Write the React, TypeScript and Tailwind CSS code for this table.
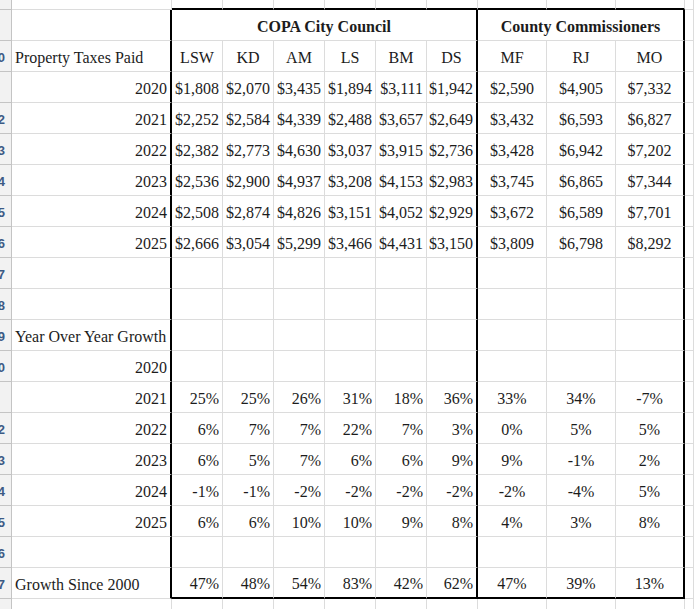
import React from "react";

const city = ["LSW", "KD", "AM", "LS", "BM", "DS"];
const county = ["MF", "RJ", "MO"];

const taxes: [string, string[]][] = [
  ["2020", ["$1,808", "$2,070", "$3,435", "$1,894", "$3,111", "$1,942", "$2,590", "$4,905", "$7,332"]],
  ["2021", ["$2,252", "$2,584", "$4,339", "$2,488", "$3,657", "$2,649", "$3,432", "$6,593", "$6,827"]],
  ["2022", ["$2,382", "$2,773", "$4,630", "$3,037", "$3,915", "$2,736", "$3,428", "$6,942", "$7,202"]],
  ["2023", ["$2,536", "$2,900", "$4,937", "$3,208", "$4,153", "$2,983", "$3,745", "$6,865", "$7,344"]],
  ["2024", ["$2,508", "$2,874", "$4,826", "$3,151", "$4,052", "$2,929", "$3,672", "$6,589", "$7,701"]],
  ["2025", ["$2,666", "$3,054", "$5,299", "$3,466", "$4,431", "$3,150", "$3,809", "$6,798", "$8,292"]],
];

const growth: [string, string[]][] = [
  ["2020", ["", "", "", "", "", "", "", "", ""]],
  ["2021", ["25%", "25%", "26%", "31%", "18%", "36%", "33%", "34%", "-7%"]],
  ["2022", ["6%", "7%", "7%", "22%", "7%", "3%", "0%", "5%", "5%"]],
  ["2023", ["6%", "5%", "7%", "6%", "6%", "9%", "9%", "-1%", "2%"]],
  ["2024", ["-1%", "-1%", "-2%", "-2%", "-2%", "-2%", "-2%", "-4%", "5%"]],
  ["2025", ["6%", "6%", "10%", "10%", "9%", "8%", "4%", "3%", "8%"]],
];

const since2000 = ["47%", "48%", "54%", "83%", "42%", "62%", "47%", "39%", "13%"];

// row numbers show only the clipped tail of the last digit (the header is scrolled off-screen)
function RowHead({ n }: { n: number }) {
  const hidden = n < 10 || n % 10 === 1;
  return (
    <div className="h-[31px] overflow-hidden border-r border-b border-[#c4c4c4] bg-[#f2f2f2]">
      {!hidden && (
        <div className="-ml-[11px] w-[18px] pt-[2px] pr-[2px] text-right font-['Liberation_Sans',sans-serif] text-[13px] font-bold leading-[30px] text-[#3c5a85]">
          {n % 10}
        </div>
      )}
    </div>
  );
}

function Cell({
  children,
  align = "right",
  right,
  bottom,
  bold,
  span,
}: {
  children?: React.ReactNode;
  align?: "left" | "right" | "center";
  right?: boolean;
  bottom?: boolean;
  bold?: boolean;
  span?: string;
}) {
  return (
    <div
      className={[
        "flex h-[31px] items-center whitespace-nowrap border-[#dcdcdc] pt-[3px]",
        right ? "border-r-2 border-r-black" : "border-r",
        bottom ? "border-b-2 border-b-black" : "border-b",
        align === "left" ? "justify-start pl-[3px]" : align === "center" ? "justify-center" : "justify-end pr-[3px]",
        bold ? "font-bold" : "",
        span ?? "",
      ].join(" ")}
    >
      {children}
    </div>
  );
}

function DataRow({
  n,
  label,
  labelAlign = "right",
  values,
  bottom,
  outside,
}: {
  n: number;
  label?: string;
  labelAlign?: "left" | "right";
  values: string[];
  bottom?: boolean;
  outside?: boolean;
}) {
  return (
    <>
      <RowHead n={n} />
      <Cell align={labelAlign} right={!outside}>
        {label}
      </Cell>
      {values.map((v, i) => (
        <Cell key={i} align={i < 6 ? "right" : "center"} right={!outside && (i === 5 || i === 8)} bottom={bottom}>
          {v}
        </Cell>
      ))}
      <Cell />
    </>
  );
}

const empty = ["", "", "", "", "", "", "", "", ""];

export default function App() {
  return (
    <div className="h-[609px] w-[694px] overflow-hidden bg-white font-['Liberation_Serif',serif] text-[16px] text-[#1c1c1c]">
      <div className="grid grid-cols-[12px_160px_51px_51px_51px_51px_51px_51px_69px_69px_69px_1fr]">
        {/* partial top row */}
        <div className="h-[10px] border-r border-b border-[#c4c4c4] bg-[#f2f2f2]" />
        <div className="h-[10px] border-r border-b border-[#dcdcdc]" />
        {[0, 1, 2, 3, 4, 5, 6, 7, 8].map((i) => (
          <div key={i} className="h-[10px] border-r border-b-2 border-[#dcdcdc] border-b-black" />
        ))}
        <div className="h-[10px] border-b border-r border-[#dcdcdc]" />

        {/* group titles */}
        <RowHead n={9} />
        <Cell right />
        <Cell align="center" right bold span="col-span-6">
          COPA City Council
        </Cell>
        <Cell align="center" right bold span="col-span-3">
          County Commissioners
        </Cell>
        <Cell />

        {/* column headers */}
        <RowHead n={10} />
        <Cell align="left" right>
          Property Taxes Paid
        </Cell>
        {[...city, ...county].map((c, i) => (
          <Cell key={c} align="center" right={i === 5 || i === 8}>
            {c}
          </Cell>
        ))}
        <Cell />

        {taxes.map(([y, v], i) => (
          <DataRow key={y} n={11 + i} label={y} values={v} />
        ))}
        <DataRow n={17} values={empty} />
        <DataRow n={18} values={empty} />
        <DataRow n={19} label="Year Over Year Growth" labelAlign="left" values={empty} />
        {growth.map(([y, v], i) => (
          <DataRow key={"g" + y} n={20 + i} label={y} values={v} />
        ))}
        <DataRow n={26} values={empty} />
        <DataRow n={27} label="Growth Since 2000" labelAlign="left" values={since2000} bottom />
        <DataRow n={28} values={empty} outside />
      </div>
    </div>
  );
}
